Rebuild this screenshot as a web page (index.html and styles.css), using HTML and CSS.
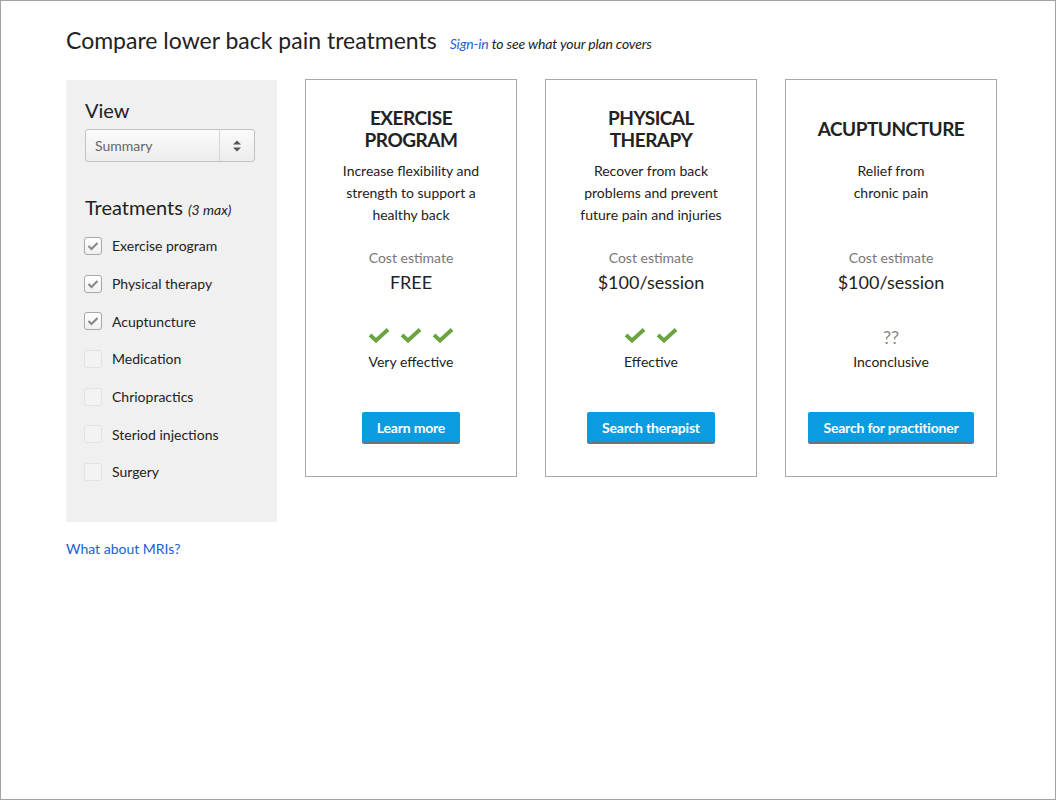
FILE: index.html
```html
<!DOCTYPE html>
<html>
<head>
<meta charset="utf-8">
<link rel="stylesheet" href="styles.css">
</head>
<body>
<div class="frame">
  <header class="head">
    <h1 class="title">Compare lower back pain treatments</h1>
    <span class="signin"><a class="link" href="#">Sign-in</a> to see what your plan covers</span>
  </header>
  <div class="main">
    <div class="side-col">
      <aside class="sidebar">
        <div class="side-h">View</div>
        <div class="select">
          <span class="select-text">Summary</span>
          <span class="select-arrows">
            <svg width="10" height="14" viewBox="0 0 10 14"><path d="M1 5.5 L5 1.5 L9 5.5 Z M1 8.5 L5 12.5 L9 8.5 Z" fill="#555"/></svg>
          </span>
        </div>
        <div class="side-h treat-h">Treatments <span class="max">(3 max)</span></div>
        <ul class="checks">
          <li class="row"><span class="cb on"><svg width="12" height="10" viewBox="0 0 12 10"><path d="M1.5 5 L4.5 8 L10.5 2" fill="none" stroke="#8a8a8a" stroke-width="2.2"/></svg></span>Exercise program</li>
          <li class="row"><span class="cb on"><svg width="12" height="10" viewBox="0 0 12 10"><path d="M1.5 5 L4.5 8 L10.5 2" fill="none" stroke="#8a8a8a" stroke-width="2.2"/></svg></span>Physical therapy</li>
          <li class="row"><span class="cb on"><svg width="12" height="10" viewBox="0 0 12 10"><path d="M1.5 5 L4.5 8 L10.5 2" fill="none" stroke="#8a8a8a" stroke-width="2.2"/></svg></span>Acuptuncture</li>
          <li class="row"><span class="cb"></span>Medication</li>
          <li class="row"><span class="cb"></span>Chriopractics</li>
          <li class="row"><span class="cb"></span>Steriod injections</li>
          <li class="row"><span class="cb"></span>Surgery</li>
        </ul>
      </aside>
      <a class="link mri" href="#">What about MRIs?</a>
    </div>

    <section class="card">
      <div class="c-title">EXERCISE<br>PROGRAM</div>
      <div class="c-desc">Increase flexibility and<br>strength to support a<br>healthy back</div>
      <div class="c-cost">Cost estimate</div>
      <div class="c-price">FREE</div>
      <div class="c-rating">
        <svg class="tick" width="22" height="16" viewBox="0 0 22 16"><path d="M2 8 L8 13.5 L20 2.5" fill="none" stroke="#6aa541" stroke-width="4"/></svg>
        <svg class="tick" width="22" height="16" viewBox="0 0 22 16"><path d="M2 8 L8 13.5 L20 2.5" fill="none" stroke="#6aa541" stroke-width="4"/></svg>
        <svg class="tick" width="22" height="16" viewBox="0 0 22 16"><path d="M2 8 L8 13.5 L20 2.5" fill="none" stroke="#6aa541" stroke-width="4"/></svg>
      </div>
      <div class="c-effect">Very effective</div>
      <a class="btn" href="#">Learn more</a>
    </section>

    <section class="card">
      <div class="c-title">PHYSICAL<br>THERAPY</div>
      <div class="c-desc">Recover from back<br>problems and prevent<br>future pain and injuries</div>
      <div class="c-cost">Cost estimate</div>
      <div class="c-price">$100/session</div>
      <div class="c-rating">
        <svg class="tick" width="22" height="16" viewBox="0 0 22 16"><path d="M2 8 L8 13.5 L20 2.5" fill="none" stroke="#6aa541" stroke-width="4"/></svg>
        <svg class="tick" width="22" height="16" viewBox="0 0 22 16"><path d="M2 8 L8 13.5 L20 2.5" fill="none" stroke="#6aa541" stroke-width="4"/></svg>
      </div>
      <div class="c-effect">Effective</div>
      <a class="btn" href="#">Search therapist</a>
    </section>

    <section class="card">
      <div class="c-title">ACUPTUNCTURE</div>
      <div class="c-desc">Relief from<br>chronic pain</div>
      <div class="c-cost">Cost estimate</div>
      <div class="c-price">$100/session</div>
      <div class="c-rating"><span class="unknown">??</span></div>
      <div class="c-effect">Inconclusive</div>
      <a class="btn" href="#">Search for practitioner</a>
    </section>
  </div>
</div>
</body>
</html>
```

FILE: styles.css
```css
* { box-sizing: border-box; }
html, body { margin: 0; padding: 0; }
body {
  font-family: Lato, "Open Sans", "Liberation Sans", sans-serif;
  color: #222;
  background: #fff;
}
.frame {
  width: 1056px;
  height: 800px;
  border: 1px solid #a3a3a3;
  padding: 25px 0 0 65px;
}
.head {
  display: flex;
  align-items: baseline;
  gap: 13px;
  height: 30px;
}
.title {
  margin: 0;
  font-size: 23px;
  font-weight: 400;
  line-height: 29px;
  color: #222;
}
.signin {
  font-size: 14px;
  font-style: italic;
  letter-spacing: -0.15px;
  color: #222;
}
.link {
  color: #1a5fd2;
  text-decoration: none;
}
.main {
  display: flex;
  gap: 28px;
  margin-top: 23px;
  align-items: flex-start;
}
.side-col {
  width: 211px;
  margin-top: 1px;
  display: flex;
  flex-direction: column;
}
.sidebar {
  background: #f0f0f0;
  padding: 18px 19px 31px 19px;
}
.side-h {
  font-size: 20px;
  line-height: 24px;
  color: #222;
}
.select {
  margin-top: 7px;
  width: 170px;
  height: 33px;
  border: 1px solid #c2c2c2;
  border-radius: 3px;
  background: linear-gradient(#fbfbfb, #ececec);
  display: flex;
  align-items: center;
}
.select-text {
  flex: 1;
  padding-left: 9px;
  font-size: 14px;
  color: #666;
}
.select-arrows {
  width: 35px;
  height: 100%;
  border-left: 1px solid #d6d6d6;
  display: flex;
  align-items: center;
  justify-content: center;
}
.treat-h {
  margin-top: 33px;
}
.max {
  font-size: 14px;
  font-style: italic;
}
.checks {
  list-style: none;
  margin: 5px 0 0 0;
  padding: 0;
}
.row {
  height: 37.7px;
  display: flex;
  align-items: center;
  font-size: 14px;
  color: #222;
}
.cb {
  width: 18px;
  height: 18px;
  margin-left: -1px;
  margin-right: 10px;
  border: 1px solid #e2e2e2;
  border-radius: 3px;
  background: #f3f3f3;
  display: flex;
  align-items: center;
  justify-content: center;
}
.cb.on {
  border-color: #a8a8a8;
  background: linear-gradient(#ffffff, #f0f0f0);
}
.mri {
  margin-top: 16px;
  font-size: 14px;
  line-height: 22px;
}
.card {
  width: 212px;
  height: 398px;
  border: 1px solid #a8a8a8;
  padding-top: 27px;
  display: flex;
  flex-direction: column;
  align-items: center;
  text-align: center;
}
.c-title {
  height: 44px;
  display: flex;
  align-items: center;
  justify-content: center;
  font-size: 19px;
  font-weight: 700;
  letter-spacing: -0.5px;
  line-height: 22px;
  color: #222;
}
.c-desc {
  margin-top: 9px;
  height: 66px;
  font-size: 14px;
  line-height: 22px;
  color: #222;
}
.c-cost {
  margin-top: 21px;
  font-size: 14px;
  line-height: 22px;
  color: #777;
}
.c-price {
  margin-top: 1px;
  font-size: 18px;
  line-height: 24px;
  color: #222;
}
.c-rating {
  margin-top: 29px;
  height: 24px;
  display: flex;
  align-items: center;
  justify-content: center;
  gap: 10px;
}
.unknown {
  font-size: 18px;
  color: #888;
  margin-top: 4px;
}
.c-effect {
  margin-top: 4px;
  font-size: 14px;
  line-height: 22px;
  color: #222;
}
.btn {
  margin-top: 39px;
  height: 30px;
  padding: 0 15px;
  display: flex;
  align-items: center;
  background: #0a9ce0;
  color: #fff;
  font-size: 14px;
  font-weight: 700;
  letter-spacing: -0.2px;
  text-decoration: none;
  border-radius: 2px;
  box-shadow: 0 2px 0 #687480;
}
```
